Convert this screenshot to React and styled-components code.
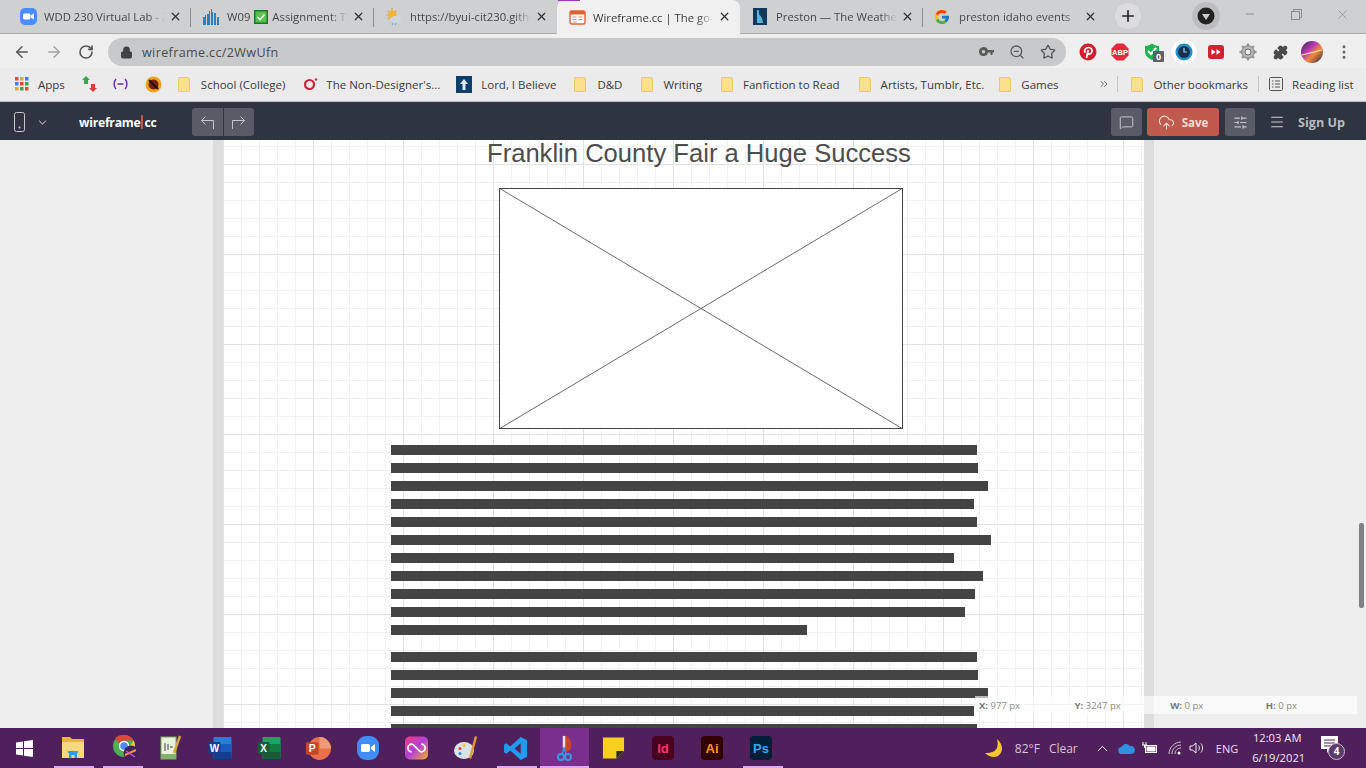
import React from "react";
import styled, { createGlobalStyle } from "styled-components";
import { ArrowLeft, ArrowRight, RotateCw, Lock, Star, ZoomOut, Plus, X, Minus, ChevronDown, ChevronUp, Puzzle, MoreVertical, MessageSquare, CloudUpload, SlidersHorizontal, Menu, ChevronsRight } from "lucide-react";

const Global = createGlobalStyle`
  html, body { margin: 0; padding: 0; height: 100%; overflow: hidden; }
  body { font-family: "Open Sans", "Noto Sans", sans-serif; }
  * { box-sizing: border-box; }
`;
const Screen = styled.div`width:1366px;height:768px;display:flex;flex-direction:column;overflow:hidden;background:#eee;`;

/* tab strip */
const TabStrip = styled.div`height:34px;flex:none;background:#cfd0d2;display:flex;align-items:stretch;padding-left:8px;border-bottom:1px solid #a9abad;position:relative;`;
const Tab = styled.div`
  width:183px;flex:none;position:relative;display:flex;align-items:center;padding-left:${p=>p.$pad}px;
  background:${p=>p.$active?"#f0f0f0":"transparent"};border-radius:8px 8px 0 0;margin-bottom:${p=>p.$active?"-1px":"0"};
`;
const TabSep = styled.div`position:absolute;right:0;top:8px;width:1px;height:19px;background:#8d8f91;`;
const TabAccent = styled.div`position:absolute;left:1px;top:0;width:22px;height:1px;background:#9b38b8;`;
const TabIcon = styled.div`width:18px;height:18px;display:flex;align-items:center;justify-content:center;flex:none;`;
const TabTitle = styled.div`margin-left:${p=>p.$gap}px;width:121px;white-space:nowrap;overflow:hidden;font-size:11.3px;color:${p=>p.$active?"#3a3a3c":"#46474a"};
  -webkit-mask-image:linear-gradient(90deg,#000 86%,transparent);mask-image:linear-gradient(90deg,#000 86%,transparent);display:flex;align-items:center;gap:4px;
  & > * {flex:none;}`;
const TabClose = styled.div`position:absolute;left:161px;top:10px;color:#333;display:flex;`;
const NewTab = styled.div`width:26px;height:26px;border-radius:50%;background:#dcdcde;margin:3px 0 0 9px;display:flex;align-items:center;justify-content:center;color:#222;flex:none;`;
const ProfileDot = styled.div`width:28px;height:28px;border-radius:50%;background:#bdbdbf;margin:2px 0 0 51px;display:flex;align-items:center;justify-content:center;flex:none;`;
const WinBtns = styled.div`display:flex;margin-left:7px;color:#8a8b8d;`;
const WinBtn = styled.div`width:46px;height:28px;display:flex;align-items:center;justify-content:center;`;

/* toolbar */
const Toolbar = styled.div`height:34px;flex:none;background:#efefef;display:flex;align-items:center;padding:2px 0 0 13px;`;
const NavIcon = styled.div`width:18px;display:flex;justify-content:center;color:${p=>p.$dim?"#a3a3a3":"#555"};margin-right:${p=>p.$mr||0}px;`;
const Omnibox = styled.div`width:958px;height:28px;margin-left:13px;border-radius:14px;background:#c8c9ca;display:flex;align-items:center;padding-left:12px;color:#3c3c3c;`;
const Url = styled.div`margin-left:9px;font-size:12.6px;color:#4a4a4c;letter-spacing:.35px;flex:1;`;
const OmniIcons = styled.div`display:flex;align-items:center;gap:15px;margin-right:10px;color:#5a5a5a;`;
const Exts = styled.div`display:flex;align-items:center;margin-left:6px;`;
const Ext = styled.div`width:32px;display:flex;justify-content:center;align-items:center;position:relative;`;
const Badge = styled.span`position:absolute;left:17px;top:8px;width:11px;height:11px;background:#5d6068;color:#fff;font-size:9px;font-weight:700;line-height:11px;text-align:center;border-radius:1px;`;

/* bookmarks */
const Bookmarks = styled.div`height:34px;flex:none;background:#ebebeb;display:flex;align-items:center;padding:0 0 1px 15px;border-bottom:1px solid #bdbdbd;`;
const Bm = styled.div`display:flex;align-items:center;margin-left:${p=>p.$ml||0}px;font-size:11.5px;color:#3a3a3c;white-space:nowrap;gap:${p=>p.$gap||8}px;`;
const Folder = styled.div`width:12px;height:15px;background:#fde08c;border:1px solid #eec95f;border-radius:1px 3px 1px 1px;flex:none;`;
const BmSep = styled.div`width:1px;height:16px;background:#c4c4c4;margin-left:${p=>p.$ml}px;`;

/* app header */
const Header = styled.div`height:38px;flex:none;background:#2e3440;display:flex;align-items:center;color:#c6c9cd;padding:2px 0 0 14px;`;
const Caret = styled.div`margin-left:11px;display:flex;color:#9ea2a8;`;
const Logo = styled.div`margin-left:30px;width:113px;font-weight:700;font-size:12.2px;color:#fff;letter-spacing:-.25px;display:flex;align-items:center;`;
const LogoBar = styled.span`display:inline-block;width:2px;height:14px;background:#c0594b;margin:0 1px;`;
const BtnGroup = styled.div`display:flex;height:28px;border-radius:3px;overflow:hidden;gap:1px;background:#2e3440;`;
const GroupBtn = styled.div`width:30.5px;background:#585c66;display:flex;align-items:center;justify-content:center;color:#c3c6ca;`;
const Spacer = styled.div`flex:1;`;
const HBtn = styled.div`height:28px;width:${p=>p.$w}px;margin-left:${p=>p.$ml||0}px;border-radius:3px;background:${p=>p.$save?"#bf5a4c":"#585c66"};display:flex;align-items:center;justify-content:center;gap:7px;color:${p=>p.$save?"#f4dcd8":"#c3c6ca"};font-size:11.5px;font-weight:700;`;
const Hamburger = styled.div`margin-left:14px;display:flex;color:#d0d3d6;`;
const SignUp = styled.div`margin-left:13px;margin-right:21px;font-size:12.6px;font-weight:700;color:#b9bcc1;white-space:nowrap;`;

/* main */
const Main = styled.div`flex:1;min-height:0;position:relative;background:#eee;padding-left:213px;overflow:hidden;`;
const Canvas = styled.div`
  width:941px;height:100%;border:solid #ddd;border-width:0 10px;overflow:hidden;background-color:#fff;
  background-image:
    linear-gradient(90deg,#e2e2e2 1px,transparent 1px),linear-gradient(180deg,#e2e2e2 1px,transparent 1px),
    linear-gradient(90deg,#f1f1f1 1px,transparent 1px),linear-gradient(180deg,#f1f1f1 1px,transparent 1px);
  background-size:90px 90px,90px 90px,18px 18px,18px 18px;
  background-position:0 0,0 24px,0 0,0 24px;
`;
const Heading = styled.h1`margin:0;height:48px;font:400 25.6px/26px "Liberation Sans",Arial,sans-serif;color:#4d4d4d;padding-left:264px;white-space:nowrap;`;
const Placeholder = styled.svg`display:block;margin-left:276px;width:404px;height:241px;background:#fff;`;
const TextBlock = styled.div`margin:${p=>p.$mt}px 0 0 168px;display:flex;flex-direction:column;gap:8px;`;
const Bar = styled.div`height:10px;background:#444;`;
const Coords = styled.div`position:absolute;left:975px;top:556px;width:382px;height:18px;background:rgba(255,255,255,.62);display:grid;grid-template-columns:repeat(4,95.6px);padding-left:4px;align-items:center;font-size:9.5px;color:#8a8a8a;`;
const CoordLabel = styled.b`color:#777;`;
const Thumb = styled.div`position:absolute;left:1359px;top:383px;width:5px;height:85px;background:#808085;border-radius:2px;`;

/* taskbar */
const Taskbar = styled.div`height:40px;flex:none;background:#50205c;display:flex;align-items:stretch;color:#e8dcea;`;
const Slot = styled.div`width:${p=>p.$w||49.2}px;flex:none;position:relative;display:flex;align-items:center;justify-content:center;background:${p=>p.$active?"#7a2f8e":"transparent"};`;
const Under = styled.div`position:absolute;left:${p=>p.$active?0:6}px;right:${p=>p.$active?0:3}px;bottom:0;height:2px;background:#e2a8ee;`;
const Tray = styled.div`margin-left:${p=>p.$ml}px;font-size:${p=>p.$fs||12}px;color:${p=>p.$c||"#d9c4de"};white-space:nowrap;display:flex;align-items:center;`;
const Clock = styled.div`margin-left:14px;width:50px;text-align:center;font-size:11.2px;line-height:20px;color:#f0e6f2;align-self:center;white-space:nowrap;`;
const Notif = styled.div`margin-left:19px;align-self:center;position:relative;width:24px;height:24px;`;
const NotifCount = styled.div`position:absolute;left:7px;top:7px;width:17px;height:17px;border-radius:50%;background:#5c3a6a;border:1px solid #c9b8ce;color:#fff;font-size:10px;font-weight:700;line-height:15px;text-align:center;`;

const Zoom=()=> <svg width="17" height="17" viewBox="0 0 17 17"><rect width="17" height="17" rx="5" fill="#4a8cff"/><rect x="3" y="5.5" width="7.5" height="6" rx="1.4" fill="#fff"/><path d="M11 7.5l3-2v6l-3-2z" fill="#fff"/></svg>;
const Bars=()=> <svg width="18" height="18" viewBox="0 0 18 18" fill="#2a7fc1"><path d="M1 17V9h2v-2h1v10zM5 17V6h2V3h1v14zM9 17V1h1v3h1v13zM12 17V5h2v12zM15 17V9h2v8z"/></svg>;
const Sun=()=> <svg width="16" height="17" viewBox="0 0 16 17"><g stroke="#e8a52c" strokeWidth="1.2"><path d="M6 0v3M0 7h3M1.700 2.700l2 2M10.300 2.700l-2 2M1.700 11.300l2-2"/></g><circle cx="6.500" cy="7" r="4.200" fill="#f4b43a"/><ellipse cx="10" cy="11" rx="5.500" ry="3" fill="#cfd8e2"/><path d="M7 15l-1 2M10 15l-1 2" stroke="#5fa8e0"/></svg>;
const WfIcon=()=> <svg width="17" height="17" viewBox="0 0 17 17"><rect x="1" y="2" width="15" height="13" rx="1.5" fill="#fff" stroke="#e2622f" strokeWidth="1.4"/><rect x="1" y="2" width="15" height="3.5" fill="#e2622f"/><path d="M3.5 8h4M3.5 10.5h4M3.5 13h4M9.5 8h4M9.5 10.5h4" stroke="#eb8a60"/></svg>;
const IdahoIcon=()=> <svg width="14" height="17" viewBox="0 0 14 17"><rect width="14" height="17" fill="#12395c"/><path d="M4 2h2v4l3 4 1 5H4z" fill="#59b4dc"/></svg>;
const G=()=> <svg width="16" height="16" viewBox="0 0 48 48"><path fill="#FFC107" d="M43.6 20H24v8.5h11.300C33.700 33.400 29.300 36.500 24 36.500c-6.900 0-12.500-5.600-12.500-12.500S17.100 11.500 24 11.500c3.100 0 6 1.200 8.100 3.100l6-6C34.300 5.100 29.400 3 24 3 12.400 3 3 12.400 3 24s9.400 21 21 21 21-9.400 21-21c0-1.400-.1-2.700-.4-4z"/><path fill="#FF3D00" d="M5.400 14.200l7 5.100C14.200 14.800 18.700 11.500 24 11.500c3.100 0 6 1.200 8.100 3.100l6-6C34.300 5.100 29.400 3 24 3 16 3 9 7.500 5.400 14.200z"/><path fill="#4CAF50" d="M24 45c5.300 0 10.200-2 13.800-5.300l-6.400-5.400C29.400 35.800 26.800 36.500 24 36.500c-5.300 0-9.700-3.100-11.500-7.800l-6.900 5.300C9 40.600 16 45 24 45z"/><path fill="#1976D2" d="M43.600 20H24v8.500h11.300c-.8 2.300-2.300 4.300-3.900 5.800l6.400 5.400C42 36 45 30.500 45 24c0-1.400-.1-2.700-.4-4z"/></svg>;
const Check=()=> <svg width="14" height="14" viewBox="0 0 14 14"><rect width="14" height="14" fill="#157a26"/><rect x="1.500" y="1.500" width="11" height="11" fill="#58c24f"/><path d="M3.500 7l2.500 2.500L10.500 4.500" stroke="#fff" strokeWidth="1.600" fill="none"/></svg>;

const tabs=[
 {icon:<Zoom/>,title:"WDD 230 Virtual Lab - Zoom",pad:11,gap:7,sep:true},
 {icon:<Bars/>,title:<><span>W09</span><Check/><span>Assignment: The</span></>,pad:11,gap:7,sep:true},
 {icon:<Sun/>,title:"https://byui-cit230.github.io",pad:11,gap:7},
 {icon:<WfIcon/>,title:"Wireframe.cc | The go-to",pad:11,gap:7,active:true},
 {icon:<IdahoIcon/>,title:"Preston — The Weather",pad:11,gap:7,sep:true},
 {icon:<G/>,title:"preston idaho events",pad:10,gap:8},
];

const Pin=()=> <svg width="18" height="18" viewBox="0 0 18 18"><circle cx="9" cy="9" r="8.500" fill="#d3202e"/><path d="M7.500 15l1.700-8M6 9.800C4.800 6.500 7 4.500 9.500 4.500c2.600 0 4 2 3.400 4.200-.6 2.400-3 3-4.300 1.700" stroke="#fff" strokeWidth="1.700" fill="none"/></svg>;
const Abp=()=> <svg width="18" height="18" viewBox="0 0 18 18"><path d="M5.500 0.500h7l5 5v7l-5 5h-7l-5-5v-7z" fill="#e6283c"/><text x="9" y="11.800" textAnchor="middle" fontSize="7.500" fontWeight="700" fill="#fff" fontFamily="Liberation Sans">ABP</text></svg>;
const Shield=()=> <svg width="16" height="18" viewBox="0 0 16 18"><path d="M1 3c3 0 5-1 7-2.500 2 1.500 4 2.500 7 2.500v6c0 4-4 6.500-7 8-3-1.500-7-4-7-8z" fill="#20b552"/><path d="M4 8l3 3 5-6" stroke="#fff" strokeWidth="2" fill="none"/></svg>;
const ClockExt=()=> <svg width="26" height="26" viewBox="0 0 26 26"><circle cx="13" cy="13" r="12.500" fill="#fff"/><circle cx="13" cy="13" r="8.500" fill="#1f8fc9"/><circle cx="13" cy="13" r="6" fill="#17324d"/><path d="M13 9v4h3" stroke="#8fd2f2" strokeWidth="1.200" fill="none"/></svg>;
const Ff=()=> <svg width="16" height="14" viewBox="0 0 16 14"><rect width="16" height="14" rx="3" fill="#d5212d"/><path d="M3.500 4l4 3-4 3zM8.500 4l4 3-4 3z" fill="#fff"/></svg>;
const Gear=()=> <svg width="18" height="18" viewBox="0 0 18 18"><g stroke="#9a9a9a" strokeWidth="2.400"><path d="M9 .5v17M.5 9h17M3 3l12 12M15 3L3 15"/></g><circle cx="9" cy="9" r="6.300" fill="#b5b5b5" stroke="#808080"/><circle cx="9" cy="9" r="3" fill="#efefef" stroke="#707070"/></svg>;
const Avatar=()=> <svg width="22" height="22" viewBox="0 0 22 22"><defs><linearGradient id="av" x1="0" y1="0" x2="1" y2="1"><stop offset="0" stopColor="#2b1a57"/><stop offset=".4" stopColor="#c23fb0"/><stop offset=".6" stopColor="#f08a3c"/><stop offset="1" stopColor="#17213f"/></linearGradient></defs><circle cx="11" cy="11" r="11" fill="url(#av)"/><path d="M1 14l20-5" stroke="#ffe9b0" strokeWidth="1.200"/></svg>;
const AppsGrid=()=> <svg width="14" height="14" viewBox="0 0 14 14">{[["#e04a3a","#e8a33a","#3f80e0"],["#3f80e0","#e04a3a","#3aa655"],["#e8a33a","#3aa655","#e04a3a"]].map((r,y)=>r.map((c,x)=><rect key={x+"-"+y} x={x*5} y={y*5} width="3.500" height="3.500" fill={c}/>))}</svg>;
const Arrows=()=> <svg width="17" height="18" viewBox="0 0 17 18"><path d="M5 1l4 4H7v4H3V5H1z" fill="#3aa655"/><path d="M12 17l-4-4h2V9h4v4h2z" fill="#dc3b3b"/></svg>;
const Brackets=()=> <svg width="17" height="12" viewBox="0 0 17 12" fill="none" stroke="#6b2bb0" strokeWidth="1.500"><path d="M4 1C1.500 3.500 1.500 8.500 4 11M13 1c2.500 2.500 2.500 7.500 0 10M5.500 6h6"/></svg>;
const Ball=()=> <svg width="17" height="17" viewBox="0 0 17 17"><circle cx="8.500" cy="8.500" r="8" fill="#f2a21f"/><circle cx="8.500" cy="8.500" r="5" fill="#7b1f15"/><path d="M4 4l9 9" stroke="#20130f" strokeWidth="2"/></svg>;
const Opera=()=> <svg width="15" height="14" viewBox="0 0 15 14" fill="none" stroke="#d0223a" strokeWidth="2.200"><circle cx="6.500" cy="7.500" r="4.500"/><circle cx="13" cy="2.500" r="1" fill="#d0223a" strokeWidth="0.500"/></svg>;
const Cross=()=> <svg width="16" height="17" viewBox="0 0 16 17"><rect width="16" height="17" fill="#0f3f68"/><path d="M8 3l4 5H9.500v6h-3V8H4z" fill="#dbe9f3"/></svg>;
const ReadList=()=> <svg width="14" height="14" viewBox="0 0 14 14" fill="none" stroke="#555"><rect x=".5" y=".5" width="13" height="13" rx="1"/><path d="M3 4h1.500M3 7h1.500M3 10h1.500M6 4h5M6 7h5M6 10h5"/></svg>;
const KeyIcon=()=> <svg width="15" height="10" viewBox="0 0 15 10" fill="#5a5a5a"><path d="M4.500 0a4.500 4.500 0 1 1-4.400 5.500 4.500 4.500 0 0 1 4.400-5.500zm0 3a1.700 1.700 0 1 0 0 3.400 1.700 1.700 0 0 0 0-3.400z" fillRule="evenodd"/><path d="M8 3h7v2.500h-1.500V8h-2V5.500H8z"/></svg>;

const Phone=()=> <svg width="11" height="20" viewBox="0 0 11 20" fill="none" stroke="#c6c9cd"><rect x=".5" y=".5" width="10" height="19" rx="2"/><circle cx="5.500" cy="15.500" r="1" fill="#c6c9cd" stroke="none"/></svg>;
const Undo=()=> <svg width="15" height="14" viewBox="0 0 15 14" fill="none" stroke="currentColor"><path d="M5.500 1.500l-4 4 4 4M1.500 5.500h12V14"/></svg>;
const Redo=()=> <svg width="15" height="14" viewBox="0 0 15 14" fill="none" stroke="currentColor"><path d="M9.500 1.500l4 4-4 4M13.500 5.500h-12V14"/></svg>;

const WinLogo=()=> <svg width="17" height="17" viewBox="0 0 17 17" fill="#fff"><path d="M0 2.500l7-1v6.500H0zM8 1.300L17 0v8H8zM0 9h7v6.500l-7-1zM8 9h9v8l-9-1.300z"/></svg>;
const Explorer=()=> <svg width="22" height="24" viewBox="0 0 22 24"><path d="M0 1h8l2 2h12v18H0z" fill="#e9b63a"/><rect y="6" width="22" height="16" fill="#f9d97c"/><path d="M7 22v-5h8v5h-2.500v-3h-3v3z" fill="#2f9be0"/><rect x="6" y="15" width="10" height="2" fill="#2f9be0"/></svg>;
const ChromeIcon=()=> <svg width="30" height="28" viewBox="0 0 28 28" style={{marginLeft:8}}><circle cx="12" cy="12" r="11" fill="#4caf50"/><path d="M12 1a11 11 0 0 1 9.500 5.500H12A5.500 5.500 0 0 0 7 9.500L3 4a11 11 0 0 1 9-3z" fill="#e0453a"/><path d="M21.500 6.500A11 11 0 0 1 12 23l4.500-8z" fill="#f5c842"/><circle cx="12" cy="12" r="4.500" fill="#4a8cf0" stroke="#fff" strokeWidth="1.500"/><circle cx="19" cy="19" r="7.500" fill="#43205f"/><path d="M13 21l11-5" stroke="#f09040" strokeWidth="2"/><path d="M14 17l9 6" stroke="#d94fc0" strokeWidth="1.500"/></svg>;
const Notepad=()=> <svg width="22" height="26" viewBox="0 0 22 26"><rect x="1" y="2" width="15" height="22" fill="#e9f3dc" stroke="#7aa85a"/><rect x="1" y="19" width="15" height="5" fill="#7fb26a"/><path d="M5 8v8M8 9v6M10 12h3" stroke="#444"/><path d="M20 1l-6 17" stroke="#d4a93a" strokeWidth="2.500"/></svg>;
const Office=({a,b,c,l})=> <svg width="25" height="24" viewBox="0 0 24 24"><rect x="5" y="1" width="18" height="22" rx="1" fill={a}/><rect x="5" y="8" width="18" height="8" fill={b}/><rect x="5" y="16" width="18" height="7" fill={c}/><rect x="0" y="6" width="12" height="12" rx="1" fill={c}/><text x="6" y="15.500" textAnchor="middle" fontSize="10" fontWeight="700" fill="#fff" fontFamily="Liberation Sans">{l}</text></svg>;
const Ppt=()=> <svg width="25" height="25" viewBox="0 0 24 24"><circle cx="13" cy="12" r="11" fill="#e8704a"/><path d="M13 1a11 11 0 0 1 11 11H13z" fill="#f09a78"/><rect x="0" y="6" width="12" height="12" rx="1" fill="#c44625"/><text x="6" y="15.500" textAnchor="middle" fontSize="10" fontWeight="700" fill="#fff" fontFamily="Liberation Sans">P</text></svg>;
const ZoomBig=()=> <svg width="24" height="26" viewBox="0 0 24 26"><rect x="1" y="1" width="22" height="24" rx="9" fill="#3f8cf5"/><rect x="5" y="9" width="9" height="8" rx="1.500" fill="#fff"/><path d="M15 12l4-3v8l-4-3z" fill="#fff"/></svg>;
const CC=()=> <svg width="23" height="24" viewBox="0 0 24 24"><defs><linearGradient id="cc" x1="0" y1="0" x2="1" y2="1"><stop offset="0" stopColor="#f03a7f"/><stop offset=".5" stopColor="#b341d8"/><stop offset="1" stopColor="#f6b01f"/></linearGradient></defs><rect width="24" height="24" rx="5" fill="url(#cc)"/><path d="M7 16a4 4 0 0 1 0-8c2 0 3 2 5 4s3 4 5 4a4 4 0 0 0 0-8" stroke="#fff" strokeWidth="1.800" fill="none"/></svg>;
const Palette=()=> <svg width="26" height="27" viewBox="0 0 26 26"><ellipse cx="11" cy="15" rx="10" ry="8.500" fill="#dce3e8"/><circle cx="7" cy="13" r="1.500" fill="#e0453a"/><circle cx="11" cy="10" r="1.500" fill="#f2c02a"/><circle cx="7" cy="18" r="1.500" fill="#2e8fd8"/><path d="M23 1l-6 22" stroke="#e09a3c" strokeWidth="2.500"/></svg>;
const VsCode=()=> <svg width="25" height="25" viewBox="0 0 24 24"><path d="M17 1l6 3v16l-6 3L7 14l-4 3-2-1.500v-7L3 7l4 3zM17 7l-6 5 6 5z" fill="#1f9cf0"/></svg>;
const Snip=()=> <svg width="22" height="28" viewBox="0 0 22 28"><path d="M11 1c7 2 9 9 6 15l-5 3z" fill="#c8452a"/><path d="M11 2v12" stroke="#e8e8e8" strokeWidth="2.500"/><circle cx="8" cy="23" r="3" fill="none" stroke="#2f9be0" strokeWidth="2"/><circle cx="15" cy="23" r="3" fill="none" stroke="#2f9be0" strokeWidth="2"/><path d="M9 20l2-6 2 6" stroke="#2f9be0" strokeWidth="1.500" fill="none"/></svg>;
const Sticky=()=> <svg width="23" height="24" viewBox="0 0 24 24"><path d="M1 1h22v14l-8 8H1z" fill="#f8cf1f"/><path d="M23 15l-8 8v-8z" fill="#2b2b2b"/></svg>;
const Adobe=({bg,fg,l})=> <svg width="22" height="24" viewBox="0 0 22 24"><rect width="22" height="24" rx="4" fill={bg}/><text x="11" y="17" textAnchor="middle" fontSize="13" fontWeight="700" fill={fg} fontFamily="Liberation Sans">{l}</text></svg>;

const Moon=()=> <svg width="18" height="19" viewBox="0 0 18 19"><path d="M12 0c1 3.500 1 8-1 10.500S5 14.500 0 14c4 4 9 5 13 3 5-3.500 6-11-1-17z" fill="#f7c62f"/></svg>;
const Cloud=()=> <svg width="17" height="11" viewBox="0 0 17 11"><path d="M4 11a3.500 3.500 0 0 1-.5-7A5 5 0 0 1 12 3a3.500 3.500 0 0 1 1.500 8z" fill="#2f90e0"/></svg>;
const Battery=()=> <svg width="16" height="14" viewBox="0 0 16 14" fill="none" stroke="#fff"><rect x="3.500" y="4.500" width="11" height="7"/><rect x="5" y="6" width="8" height="4" fill="#fff"/><path d="M1 1v3M4 1v3M0 4h5M2.500 4v3"/></svg>;
const WifiIcon=()=> <svg width="15" height="14" viewBox="0 0 15 14" fill="none" stroke="#cfc4d3"><path d="M1 13C1 6.500 6.500 1 13 1M4 13c0-5 4-9 9-9M7 13c0-3.300 2.700-6 6-6"/><circle cx="11" cy="12" r="1.500" fill="#fff" stroke="none"/></svg>;
const Speaker=()=> <svg width="16" height="14" viewBox="0 0 16 14" fill="none" stroke="#eee"><path d="M1 5h2.500L7 2v10L3.500 9H1z"/><path d="M9.500 4.500c1.200 1.500 1.200 3.500 0 5M12 2.500c2 2.500 2 6.500 0 9"/></svg>;
const Bubble=()=> <svg width="17" height="18" viewBox="0 0 17 18" fill="#fff"><path d="M0 0h17v13H9l-3 4v-4H0z"/><path d="M3 4h11M3 7h11M3 10h7" stroke="#50205c"/></svg>;

const exts=[<Pin/>,<Abp/>,<><Shield/><Badge>0</Badge></>,<ClockExt/>,<Ff/>,<Gear/>,<Puzzle size={15} color="#4a4a4a" fill="#4a4a4a"/>,<Avatar/>,<MoreVertical size={18} color="#666"/>];
const lines1=[586,587,597,583,586,600,563,592,584,574,416];
const lines2=[586,587,597,583,586];
const apps=[{i:<Explorer/>,u:1},{i:<ChromeIcon/>,u:1},{i:<Notepad/>},{i:<Office a="#2b7cd3" b="#185abd" c="#103f91" l="W"/>},{i:<Office a="#21a366" b="#107c41" c="#185c37" l="X"/>},{i:<Ppt/>},{i:<ZoomBig/>},{i:<CC/>},{i:<Palette/>},{i:<VsCode/>,u:1},{i:<Snip/>,a:1},{i:<Sticky/>},{i:<Adobe bg="#49021f" fg="#ff3366" l="Id"/>},{i:<Adobe bg="#330000" fg="#ff9a00" l="Ai"/>},{i:<Adobe bg="#001e36" fg="#31a8ff" l="Ps"/>,u:1}];

export default function App(){
 return <Screen><Global/>
  <TabStrip>
   {tabs.map((t,i)=><Tab key={i} $active={t.active} $pad={t.pad}>{t.active&&<TabAccent/>}<TabIcon>{t.icon}</TabIcon><TabTitle $gap={t.gap} $active={t.active}>{t.title}</TabTitle><TabClose><X size={13} strokeWidth={2.4}/></TabClose>{t.sep&&<TabSep/>}</Tab>)}
   <NewTab><Plus size={18} strokeWidth={2.2}/></NewTab>
   <ProfileDot><svg width="18" height="18" viewBox="0 0 18 18"><circle cx="9" cy="9" r="8.500" fill="#222"/><path d="M5 7h8l-4 6z" fill="#ccc"/></svg></ProfileDot>
   <WinBtns><WinBtn><Minus size={12}/></WinBtn><WinBtn><svg width="11" height="11" viewBox="0 0 11 11" fill="none" stroke="#8a8b8d"><rect x=".5" y="2.500" width="8" height="8"/><path d="M2.500 2.500v-2h8v8h-2"/></svg></WinBtn><WinBtn><X size={15} strokeWidth={1.2}/></WinBtn></WinBtns>
  </TabStrip>
  <Toolbar>
   <NavIcon $mr={14}><ArrowLeft size={18}/></NavIcon><NavIcon $dim $mr={14}><ArrowRight size={18}/></NavIcon><NavIcon><RotateCw size={16} strokeWidth={2.4}/></NavIcon>
   <Omnibox><Lock size={13} fill="#444" strokeWidth={2}/><Url>wireframe.cc/2WwUfn</Url><OmniIcons><KeyIcon/><ZoomOut size={16}/><Star size={16}/></OmniIcons></Omnibox>
   <Exts>{exts.map((e,i)=><Ext key={i}>{e}</Ext>)}</Exts>
  </Toolbar>
  <Bookmarks>
   <Bm $gap={9}><AppsGrid/>Apps</Bm><Bm $ml={16}><Arrows/></Bm><Bm $ml={14}><Brackets/></Bm><Bm $ml={16}><Ball/></Bm>
   <Bm $ml={16} $gap={11}><Folder/>School (College)</Bm><Bm $ml={18} $gap={8}><Opera/>The Non-Designer's...</Bm>
   <Bm $ml={16} $gap={9}><Cross/>Lord, I Believe</Bm><Bm $ml={18} $gap={11}><Folder/>D&amp;D</Bm><Bm $ml={19} $gap={10}><Folder/>Writing</Bm>
   <Bm $ml={19} $gap={10}><Folder/>Fanfiction to Read</Bm><Bm $ml={19} $gap={10}><Folder/>Artists, Tumblr, Etc.</Bm><Bm $ml={15} $gap={10}><Folder/>Games</Bm>
   <Bm $ml={39}><ChevronsRight size={12} color="#666"/></Bm><BmSep $ml={7}/><Bm $ml={13} $gap={11}><Folder/>Other bookmarks</Bm><BmSep $ml={10}/><Bm $ml={10} $gap={9}><ReadList/>Reading list</Bm>
  </Bookmarks>
  <Header>
   <Phone/><Caret><ChevronDown size={13}/></Caret>
   <Logo>wireframe<LogoBar/>cc</Logo>
   <BtnGroup><GroupBtn><Undo/></GroupBtn><GroupBtn><Redo/></GroupBtn></BtnGroup>
   <Spacer/>
   <HBtn $w={31}><MessageSquare size={15} strokeWidth={1.6}/></HBtn>
   <HBtn $save $w={72} $ml={5}><CloudUpload size={17} strokeWidth={1.5}/>Save</HBtn>
   <HBtn $w={30} $ml={6}><SlidersHorizontal size={15} strokeWidth={1.7}/></HBtn>
   <Hamburger><Menu size={16} strokeWidth={1.6}/></Hamburger>
   <SignUp>Sign Up</SignUp>
  </Header>
  <Main>
   <Canvas>
    <Heading>Franklin County Fair a Huge Success</Heading>
    <Placeholder viewBox="0 0 404 241"><rect x=".5" y=".5" width="403" height="240" fill="#fff" stroke="#444"/><path d="M0 0L404 241M404 0L0 241" stroke="#444" strokeWidth=".8"/></Placeholder>
    <TextBlock $mt={16}>{lines1.map((w,i)=><Bar key={i} style={{width:w}}/>)}</TextBlock>
    <TextBlock $mt={17}>{lines2.map((w,i)=><Bar key={i} style={{width:w}}/>)}</TextBlock>
   </Canvas>
   <Coords><span><CoordLabel>X:</CoordLabel> 977 px</span><span><CoordLabel>Y:</CoordLabel> 3247 px</span><span><CoordLabel>W:</CoordLabel> 0 px</span><span><CoordLabel>H:</CoordLabel> 0 px</span></Coords>
   <Thumb/>
  </Main>
  <Taskbar>
   <Slot $w={48}><WinLogo/></Slot>
   {apps.map((a,i)=><Slot key={i} $active={a.a}>{a.i}{(a.u||a.a)&&<Under $active={a.a}/>}</Slot>)}
   <Tray $ml={199}><Moon/></Tray><Tray $ml={12}>82°F</Tray><Tray $ml={9}>Clear</Tray>
   <Tray $ml={16} $c="#fff"><ChevronUp size={17} strokeWidth={1.4}/></Tray><Tray $ml={7}><Cloud/></Tray><Tray $ml={7}><Battery/></Tray>
   <Tray $ml={10}><WifiIcon/></Tray><Tray $ml={6}><Speaker/></Tray>
   <Tray $ml={11} $fs={11} $c="#eadfec">ENG</Tray>
   <Clock>12:03 AM<br/>6/19/2021</Clock>
   <Notif><Bubble/><NotifCount>4</NotifCount></Notif>
  </Taskbar>
 </Screen>;
}
